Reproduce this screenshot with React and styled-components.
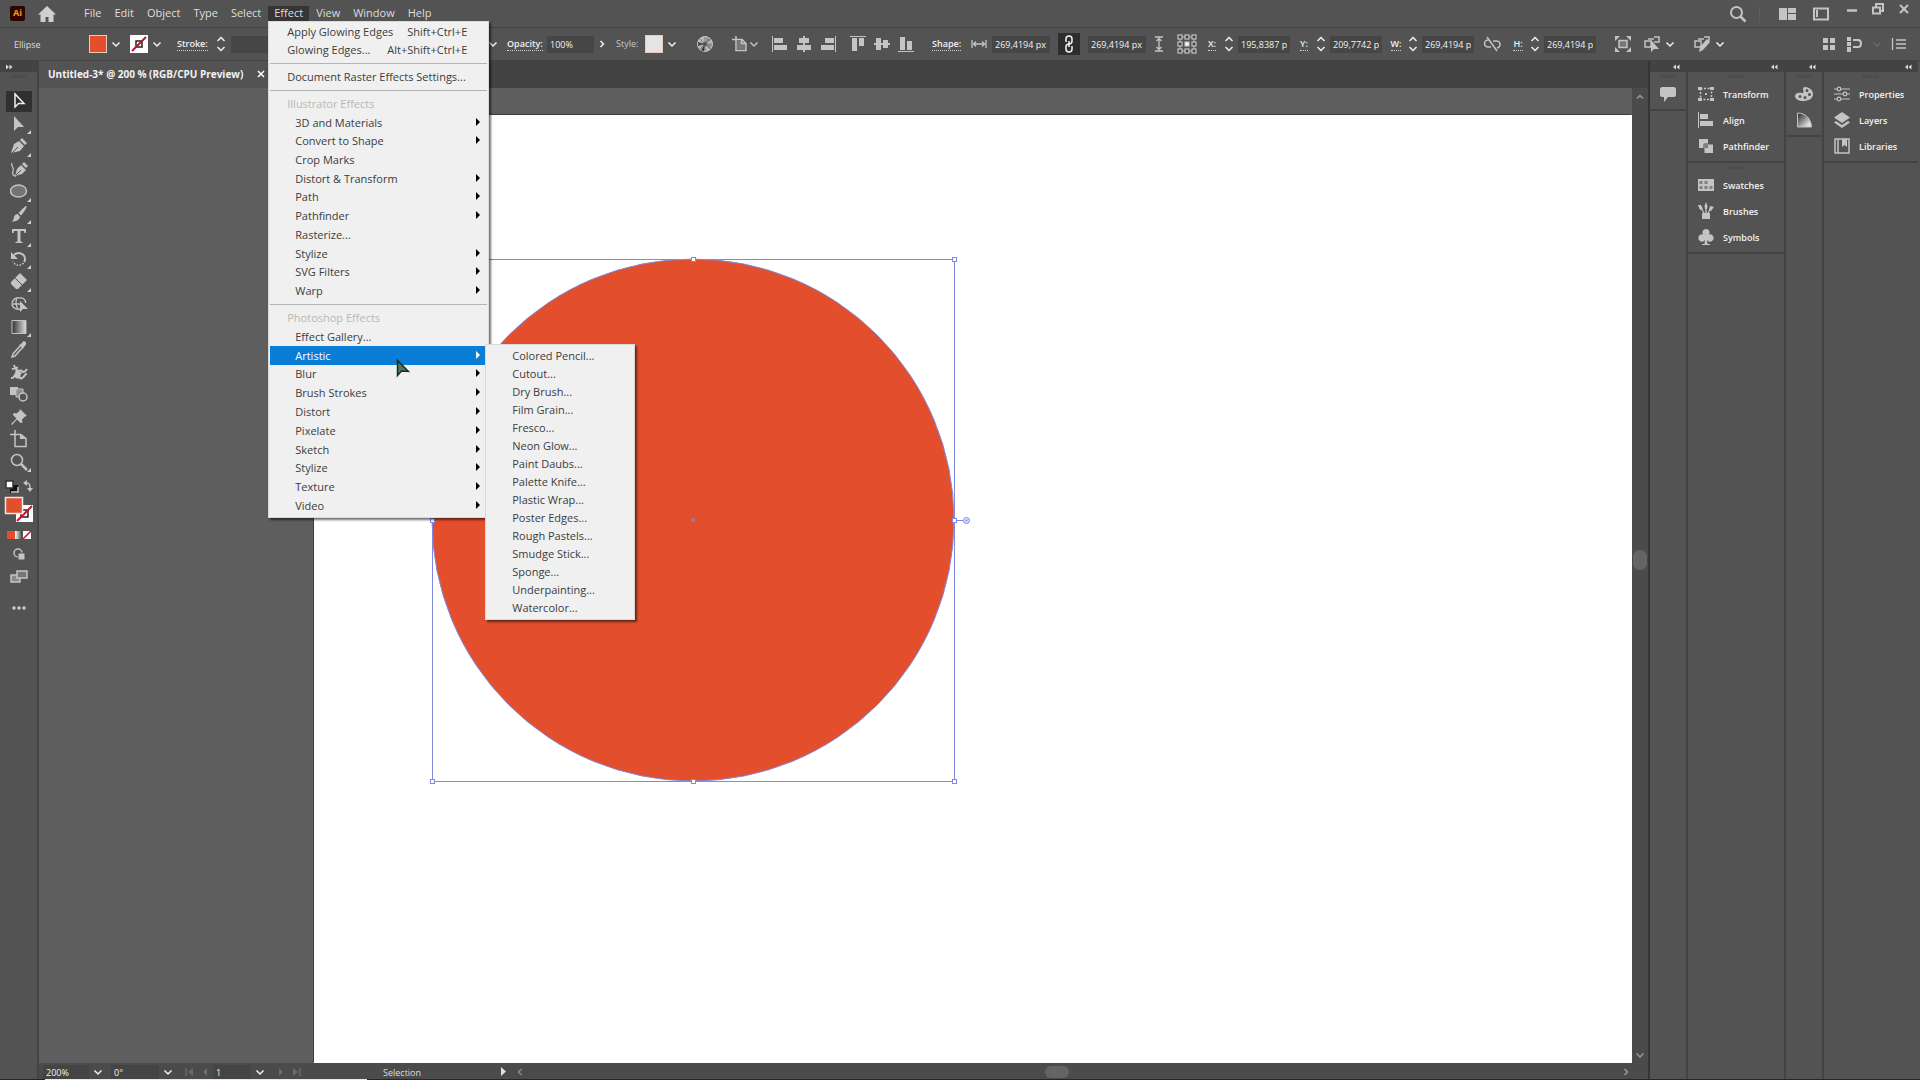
import React from "react";
import styled, { createGlobalStyle, css } from "styled-components";

const c = {
  bar: "#535353",
  edge: "#434343",
  field: "#464646",
  icon: "#c4c4c4",
  text: "#dedede",
  canvas: "#5e5e5e",
  menu: "#f0f0f0",
  select: "#0a7dd6",
  fill: "#e34f2d",
  path: "#8189e0",
};

const Global = createGlobalStyle`
  *, *::before, *::after { box-sizing: border-box; }
  body { margin: 0; background: ${c.bar}; overflow: hidden; }
  body, button, input, select {
    font-family: "Open Sans", "Noto Sans", "Segoe UI", sans-serif;
    font-size: 9px;
    color: ${c.text};
  }
  button { border: 0; padding: 0; background: none; cursor: default; }
  svg { display: block; flex: none; }
`;

const Screen = styled.div`
  display: flex;
  flex-direction: column;
  height: 100vh;
  background: ${c.bar};
`;

/* ---------- title bar ---------- */
const TitleBar = styled.header`
  display: flex;
  align-items: center;
  height: 28px;
  padding: 0 10px;
  border-bottom: 1px solid ${c.edge};
`;
const Logo = styled.div`
  width: 15px;
  height: 15px;
  margin-right: 13px;
  border-radius: 2px;
  background: #2d0500;
  color: #ff9a12;
  font-size: 9px;
  font-weight: 700;
  line-height: 14px;
  text-align: center;
`;
const MenuBar = styled.nav`
  display: flex;
  flex: 1;
  gap: 1px;
  margin-left: 22px;
`;
const MenuSlot = styled.div`
  position: relative;
`;
const MenuTitle = styled.button`
  display: block;
  height: 16px;
  padding: 0 6px 2px;
  font-size: 11px;
  line-height: 14px;
  background: ${(p) => (p.$open ? "#353535" : "none")};
`;
const WindowTools = styled.div`
  display: flex;
  align-items: center;
  gap: 16px;
`;
const Divider = styled.span`
  width: 1px;
  height: 16px;
  margin: 0 2px 0 -4px;
  background: #5e5e5e;
`;
const WindowButtons = styled.div`
  display: flex;
  align-items: flex-start;
  gap: 13px;
  height: 23px;
`;

/* ---------- menus ---------- */
const menuBox = css`
  position: absolute;
  background: ${c.menu};
  border: 1px solid #dadada;
  box-shadow: 2px 2px 2px rgba(0, 0, 0, 0.55);
`;
const Dropdown = styled.div`
  ${menuBox}
  z-index: 5;
  top: 15px;
  left: 0;
  width: 221px;
  padding: 1px;
`;
const MenuGroup = styled.div`
  display: grid;
  grid-auto-rows: 1fr;
  height: ${(p) => p.$h}px;
`;
const Rule = styled.hr`
  height: 8px;
  margin: 0;
  border: 0;
  background: linear-gradient(#b4b4b4, #b4b4b4) center / 100% 1px no-repeat;
`;
const RowWrap = styled.div`
  position: relative;
  display: grid;
`;
const MenuRow = styled.button`
  display: flex;
  align-items: center;
  justify-content: space-between;
  padding: 0 20px 0 ${(p) => (p.$top ? 17 : 25)}px;
  ${(p) => p.$arrow && "padding-right: 7px;"}
  font-size: 11px;
  line-height: 16px;
  white-space: nowrap;
  color: ${(p) => (p.$active ? "#fff" : "#3c3c3c")};
  background: ${(p) => (p.$active ? c.select : "none")};
`;
const MenuHeading = styled.div`
  display: flex;
  align-items: center;
  padding-left: 17px;
  font-size: 11px;
  line-height: 16px;
  color: #b8b8b8;
`;
const Submenu = styled.div`
  ${menuBox}
  z-index: 6;
  top: -2px;
  left: calc(100% - 2px);
  width: 150px;
  padding: 2px 1px;
`;

/* ---------- control bar ---------- */
const ControlBar = styled.section`
  display: flex;
  align-items: center;
  height: 33px;
  padding: 0 12px 0 14px;
  border-bottom: 1px solid ${c.edge};
  background: ${c.bar};
`;
const Section = styled.div`
  display: flex;
  align-items: center;
  gap: ${(p) => p.$gap || 0}px;
  padding-left: ${(p) => p.$lead || 6}px;
`;
const Cell = styled.span`
  display: flex;
  align-items: center;
  justify-content: center;
  width: ${(p) => p.$w}px;
`;
const Title = styled.span`
  width: 75px;
`;
const Label = styled.label`
  flex: none;
  width: ${(p) => p.$w}px;
  font-weight: ${(p) => (p.$plain ? 400 : 600)};
  line-height: 12px;
  text-align: ${(p) => (p.$center ? "center" : "left")};
  color: ${(p) => (p.$plain ? "#c8c8c8" : "#f0f0f0")};
  span {
    display: inline-block;
    border-bottom: 1px dotted #d0d0d0;
  }
`;
const Picker = styled.button`
  display: flex;
  align-items: center;
  width: 41px;
`;
const Swatch = styled.span`
  width: 18px;
  height: 18px;
  margin-right: 4px;
  border: 1px solid #f0c9bd;
  background: ${(p) => p.$color};
`;
const Field = styled.input`
  width: ${(p) => p.$w}px;
  height: 17px;
  padding: 0 3px;
  border: 0;
  outline: 0;
  background: ${c.field};
  color: #f2f2f2;
  font-weight: 500;
  cursor: default;
`;
const LinkButton = styled.button`
  display: grid;
  place-items: center;
  width: 22px;
  height: 22px;
  margin: 0 4px;
  background: #2e2e2e;
`;
const Spacer = styled.span`
  flex: 1;
`;

/* ---------- work area ---------- */
const Body = styled.main`
  display: flex;
  flex: 1;
  min-height: 0;
`;
const ToolColumn = styled.aside`
  display: flex;
  flex-direction: column;
  width: 39px;
  border-right: 2px solid ${c.edge};
`;
const PanelHead = styled.div`
  display: flex;
  align-items: center;
  justify-content: ${(p) => (p.$left ? "flex-start" : "flex-end")};
  height: 11px;
  padding: 0 6px;
  background: ${c.edge};
`;
const Grip = styled.div`
  width: 16px;
  height: 3px;
  margin: 3px auto;
  background: repeating-linear-gradient(90deg, #484848 0 1px, ${c.bar} 1px 2px);
`;
const ToolList = styled.div`
  display: grid;
  grid-auto-rows: 1fr;
  height: 383px;
  margin-top: 9px;
`;
const Tool = styled.button`
  position: relative;
  display: grid;
  place-items: center;
  width: 26px;
  margin: 1px 0 1px 6px;
  background: ${(p) => (p.$active ? "#303030" : "none")};
`;
const Corner = styled.i`
  position: absolute;
  right: 1px;
  bottom: 0;
  border: solid transparent;
  border-width: 2px;
  border-right-color: #d0d0d0;
  border-bottom-color: #d0d0d0;
`;
const ToolFoot = styled.div`
  display: flex;
  flex-direction: column;
  align-items: center;
  gap: 7px;
  margin-top: 6px;
`;
const Extra = styled.button`
  display: grid;
  place-items: center;
  height: 16px;
  margin-bottom: ${(p) => (p.$gap ? 8 : 0)}px;
`;

const Document = styled.section`
  display: flex;
  flex-direction: column;
  flex: 1;
  min-width: 0;
`;
const TabBar = styled.div`
  display: flex;
  height: 27px;
  background: ${c.edge};
`;
const Tab = styled.div`
  display: flex;
  align-items: center;
  gap: 14px;
  padding: 0 9px 2px;
  background: ${c.bar};
  color: #f2f2f2;
  font-size: 10px;
  font-weight: 700;
  white-space: nowrap;
`;
const CanvasRow = styled.div`
  display: flex;
  flex: 1;
  min-height: 0;
`;
const Canvas = styled.div`
  position: relative;
  flex: 1;
  padding: 27px 0 0 275px;
  background: ${c.canvas};
`;
const Artboard = styled.div`
  height: 100%;
  background: #fff;
  box-shadow: -1px -1px 0 #3c3c3c;
`;
const Artwork = styled.svg`
  position: absolute;
  left: 387px;
  top: 165px;
`;
const VScroll = styled.div`
  display: flex;
  flex-direction: column;
  align-items: center;
  justify-content: space-between;
  width: 16px;
  padding: 4px 0 3px;
  background: #4b4b4b;
`;
const Thumb = styled.span`
  width: ${(p) => (p.$vertical ? 14 : 24)}px;
  height: ${(p) => (p.$vertical ? 20 : 12)}px;
  margin: ${(p) => (p.$vertical ? "0 0 32px" : "0 32px 0 0")};
  border-radius: 8px;
  background: #646464;
`;
const StatusBar = styled.footer`
  display: flex;
  align-items: center;
  height: 16px;
  padding: 2px 17px 0 4px;
  background: #4b4b4b;
`;
const Combo = styled.span`
  display: flex;
  align-items: center;
  width: ${(p) => p.$w}px;
`;
const ComboSelect = styled.select`
  flex: 1;
  height: 14px;
  margin-right: 4px;
  padding: 0 3px;
  border: 0;
  appearance: none;
  background: #444;
  color: #f2f2f2;
`;
const Mode = styled.span`
  width: 116px;
`;
const HScroll = styled.div`
  display: flex;
  flex: 1;
  align-items: center;
  justify-content: space-between;
`;
const TaskEdge = styled.div`
  height: 1px;
  padding-left: 45px;
  background: #262626;
`;
const TaskStrip = styled.div`
  width: 322px;
  height: 1px;
  background: #e8e8e8;
`;

/* ---------- dock ---------- */
const Dock = styled.aside`
  display: flex;
  border-left: 2px solid #353535;
`;
const DockColumn = styled.div`
  width: ${(p) => p.$w}px;
  border-right: 2px solid ${(p) => (p.$last ? c.bar : c.edge)};
`;
const DockGroup = styled.div`
  padding-bottom: 2px;
  border-bottom: 2px solid ${c.edge};
`;
const DockItem = styled.button`
  display: flex;
  align-items: center;
  gap: 8px;
  width: 100%;
  height: 26px;
  padding-left: 9px;
  color: #f2f2f2;
  font-weight: 600;
`;

/* ---------- icons ---------- */
const Ic = ({ w = 18, h = 18, vb, children, ...rest }) => (
  <svg width={w} height={h} viewBox={vb || `0 0 ${w} ${h}`} fill="none" stroke={c.icon} strokeWidth="1.5" aria-hidden="true" {...rest}>
    {children}
  </svg>
);
const F = { fill: c.icon, stroke: "none" };
const Down = ({ color = "#f0f0f0" }) => (
  <Ic w={10} h={10} stroke={color}><path d="M1.500 3.500L5 7l3.500-3.500" /></Ic>
);
const Up = () => <Ic w={10} h={10} stroke="#999"><path d="M2 6.5l3-3 3 3" /></Ic>;
const Right = ({ color = "#f0f0f0" }) => (
  <Ic w={10} h={10} stroke={color}><path d="M3.5 2l3 3-3 3" /></Ic>
);
const Left = () => <Ic w={10} h={10} stroke="#8a8a8a"><path d="M6.5 2l-3 3 3 3" /></Ic>;
const Stepper = () => (
  <Ic w={10} h={16} stroke="#f0f0f0"><path d="M1.5 5L5 1.5 8.5 5M1.5 11L5 14.5 8.5 11" /></Ic>
);
const Double = ({ flip }) => (
  <Ic w={7} h={6} stroke="none"><path fill="#d8d8d8" d={flip ? "M0 .5L3 3 0 5.5zM3.5.5L6.5 3 3.500 5.500z" : "M3 .5L0 3l3 2.500zM6.5.5L3.5 3l3 2.500z"} /></Ic>
);
const NoneSwatch = () => (
  <Ic stroke="none">
    <path fill="#fff" d="M0 0h18v18H0z" />
    <path stroke="#222" strokeWidth="1.5" fill="none" d="M6 6h6v6H6z" />
    <path stroke="#c8102e" strokeWidth="2" d="M2 16L16 2" />
  </Ic>
);

const alignPaths = {
  left: "M1 1h1v16H1zM3 3h9v5H3zM3 10h13v5H3z",
  center: "M8 1h2v16H8zM4 3h10v5H4zM2 10h14v5H2z",
  right: "M16 1h1v16h-1zM6 3h9v5H6zM2 10h13v5H2z",
  top: "M1 1h16v1H1zM3 3h5v13H3zM10 3h5v8h-5z",
  middle: "M1 8h16v2H1zM3 3h5v12H3zM10 5h5v8h-5z",
  bottom: "M1 16h16v1H1zM3 2h5v13H3zM10 6h5v9h-5z",
};
const AlignIc = ({ kind }) => <Ic><path {...F} d={alignPaths[kind]} /></Ic>;

const tools = [
  ["Selection", <path stroke="#f0f0f0" d="M5 2v13l3.500-3.500H14z" />, false],
  ["Direct Selection", <path {...F} d="M4 1v15l4-4h6z" />, true],
  ["Pen", <><path {...F} d="M1 16l3-9 5-3 5 5-4 5zM10 3l2-2 5 5-2 2z" /><path stroke={c.bar} strokeWidth="1" d="M2 16l6-6" /></>, true],
  ["Curvature", <><path {...F} d="M5 16l2-7 4-4 5 5-4 4zM12 4l2-2 4 4-2 2z" /><path stroke={c.bar} strokeWidth="1" d="M5 16l6-6" /><path strokeWidth="1.3" d="M2 3c-2 3 3 4 1 8-1 3 0 5 3 5" /></>, false],
  ["Ellipse", <ellipse cx="8.500" cy="9" rx="8" ry="6" fill="#747474" />, true],
  ["Paintbrush", <path {...F} d="M16.5 1c1 1-3 7-5.500 9.500L8.500 8C11 5.500 15.500 0 16.500 1zM7.500 9l2.500 2.500c-.5 4-4 5-8.500 5 2-1 2-2 2.500-4.500.5-2 2-3 3.500-3z" />, true],
  ["Type", <path {...F} d="M2 2h14v4h-1.500l-.5-2h-3.500v10.500l2 .5v1h-7v-1l2-.5V4H4l-.5 2H2z" />, true],
  ["Rotate", <><path d="M4 5c4-4 11-1.500 11 4 0 1-.3 2-.8 3" strokeWidth="2" /><path {...F} d="M1 2v7h7z" /><path strokeDasharray="1.5 1.5" d="M13.5 13c-3 3.500-8.500 3-10.500-1.500" /></>, true],
  ["Eraser", <><path {...F} d="M10 1l7 7-9 9H6l-5-5v-2z" /><path stroke={c.bar} strokeWidth="1" d="M5 6l7 7" /></>, true],
  ["Shape Builder", <><path d="M11 14c-4 1-9-1-9-5s4-7 7-6c4-1 7 2 6.500 5M3 9h9M7 3c-2 3-1 8 1 11" strokeWidth="1.3" /><path {...F} d="M10 6v11l3-3h5z" /></>, false],
  ["Gradient", <><defs><linearGradient id="toolGrad"><stop stopColor="#333" /><stop offset="1" stopColor="#ddd" /></linearGradient></defs><path fill="url(#toolGrad)" d="M2 2.500h14v13H2z" strokeWidth="1" /></>, true],
  ["Eyedropper", <><path {...F} d="M9 5l2-1 2-2.500c1.500-1 4 1 3 3L14 7l-1 2z" /><path d="M10 6l-7 8-1 3 3-1 7-8" /></>, false],
  ["Puppet Warp", <><path strokeWidth="2" d="M4 2l1.500 4M2 6l6-1.500M6 6c2 4 5 0 6 2s3 1 5-2" /><path d="M1 15c4 1 2-4 6-4s1 6 5 4c3-1 2-4 5-4" strokeWidth="2" /><path {...F} d="M6 6l6 4-4 6-4-2z" /></>, false],
  ["Blend", <><path {...F} d="M0 2h8v8H0z" /><path fill="#8b8b8b" d="M6 4h7v8H6z" strokeWidth="1" /><circle cx="13" cy="12" r="4" fill={c.bar} /></>, false],
  ["Pin", <path {...F} d="M10 1l7 7-2 .5-3 3 .5 3-2 .5L7 11.500 2 17l-1-1 5.500-5.500L3 7l.5-2 3 .5 3-2.500z" />, false],
  ["Artboard", <><path d="M0 4.500h11l5 4v8H5V0" /><path {...F} d="M10 4v5h6z" /></>, false],
  ["Zoom", <><circle cx="7" cy="7" r="5.500" /><path strokeWidth="2.5" d="M11 11l6 6" /></>, true],
];

const dockIcons = {
  Transform: <><path strokeDasharray="2 1.500" d="M3.500 3.500h11v11h-11z" /><path {...F} d="M1 2h4v3H1zM13 2h4v3h-4zM1 13h4v3H1zM13 13h4v3h-4zM8 8h2v2H8z" /></>,
  Align: <path {...F} d="M1 1h1v16H1zM3 3h8v5H3zM3 10h13v5H3z" />,
  Pathfinder: <><path {...F} d="M2 2h9v9H2z" /><path fill={c.icon} stroke={c.bar} strokeWidth="1" d="M7 7h9.500v9.500H7z" /><path fill="#777" stroke="none" d="M8 8h3v3H8z" /></>,
  Swatches: <><path {...F} d="M1 3h16v12H1z" /><path fill="#808080" stroke="none" d="M2.500 5h3v3h-3zM7.500 5h3v3h-3zM2.500 10h3v3h-3zM7.500 10h3v3h-3zM12.500 10h3v3h-3z" /></>,
  Brushes: <><path {...F} d="M5 11h8v6H5z" /><path strokeWidth="1.3" d="M7 11L4 6M9 11V3M11 11l3-5" /><path {...F} d="M1 3l3 0 2 4-3 1zM7.500 4L9 0l1.500 4-.5 3H8zM13 4l4 1-3 4-2-1z" /></>,
  Symbols: <path {...F} d="M9 1a3.500 3.500 0 013 5.500A3.600 3.600 0 1110 12l.5 4H13v1H5v-1h2.500L8 12A3.600 3.600 0 116 6.500 3.500 3.500 0 019 1z" />,
  Properties: <><path strokeWidth="1" d="M1 4h16M1 9h16M1 14h16" /><g fill={c.bar} strokeWidth="1.2"><circle cx="6" cy="4" r="1.8" /><circle cx="12" cy="9" r="1.8" /><circle cx="6" cy="14" r="1.8" /></g></>,
  Layers: <path {...F} d="M9 1l8 5.500L9 12 1 6.500zM3 10l6 4 6-4 2 1.500L9 17l-8-5.500z" />,
  Libraries: <><path d="M2 2h14v14H2zM5 2v14" /><path {...F} d="M9 2h5v8l-2.500-2L9 10z" /></>,
};

/* ---------- menu data ---------- */
const illustrator = ["3D and Materials>", "Convert to Shape>", "Crop Marks", "Distort & Transform>", "Path>", "Pathfinder>", "Rasterize...", "Stylize>", "SVG Filters>", "Warp>"];
const photoshop = ["Effect Gallery...", "Artistic>", "Blur>", "Brush Strokes>", "Distort>", "Pixelate>", "Sketch>", "Stylize>", "Texture>", "Video>"];
const artistic = ["Colored Pencil...", "Cutout...", "Dry Brush...", "Film Grain...", "Fresco...", "Neon Glow...", "Paint Daubs...", "Palette Knife...", "Plastic Wrap...", "Poster Edges...", "Rough Pastels...", "Smudge Stick...", "Sponge...", "Underpainting...", "Watercolor..."];

function Entry({ text }) {
  const arrow = text.endsWith(">");
  const name = arrow ? text.slice(0, -1) : text;
  const active = name === "Artistic";
  return (
    <RowWrap>
      <MenuRow $arrow={arrow} $active={active}>
        {name}
        {arrow && <Ic w={4} h={10}><path stroke="none" fill={active ? "#fff" : "#000"} d="M0 0l4 4-4 4z" /></Ic>}
      </MenuRow>
      {active && (
        <Submenu>
          <MenuGroup $h={270}>{artistic.map((t) => <MenuRow key={t}>{t}</MenuRow>)}</MenuGroup>
        </Submenu>
      )}
    </RowWrap>
  );
}

function EffectMenu() {
  return (
    <Dropdown>
      <MenuGroup $h={37}>
        <MenuRow $top><span>Apply Glowing Edges</span><span>Shift+Ctrl+E</span></MenuRow>
        <MenuRow $top><span>Glowing Edges...</span><span>Alt+Shift+Ctrl+E</span></MenuRow>
      </MenuGroup>
      <Rule />
      <MenuGroup $h={19}><MenuRow $top>Document Raster Effects Settings...</MenuRow></MenuGroup>
      <Rule />
      <MenuGroup $h={206}>
        <MenuHeading>Illustrator Effects</MenuHeading>
        {illustrator.map((t) => <Entry key={t} text={t} />)}
      </MenuGroup>
      <Rule />
      <MenuGroup $h={207}>
        <MenuHeading>Photoshop Effects</MenuHeading>
        {photoshop.map((t) => <Entry key={t} text={t} />)}
      </MenuGroup>
    </Dropdown>
  );
}

function Coordinate({ id, label, value }) {
  return (
    <>
      <Label $center $w={16} htmlFor={id}><span>{label}:</span></Label>
      <Stepper />
      <Field id={id} $w={52} defaultValue={value} />
    </>
  );
}

function Controls() {
  return (
    <ControlBar>
      <Title>Ellipse</Title>
      <Picker aria-label="Fill"><Swatch $color={c.fill} /><Down /></Picker>
      <Picker aria-label="Stroke colour"><NoneSwatch /><Cell $w={18}><Down /></Cell></Picker>
      <Section>
        <Label $w={38} htmlFor="stroke"><span>Stroke:</span></Label>
        <Cell $w={12}><Stepper /></Cell>
        <Cell $w={4} />
        <Field id="stroke" $w={254} defaultValue="" />
        <Cell $w={16}><Down /></Cell>
      </Section>
      <Section>
        <Label $w={40} htmlFor="opacity"><span>Opacity:</span></Label>
        <Field id="opacity" $w={47} defaultValue="100%" />
        <Cell $w={16}><Right /></Cell>
      </Section>
      <Section>
        <Label as="span" $plain $w={29}>Style:</Label>
        <Picker aria-label="Style"><Swatch $color="#e4e4e4" /><Down /></Picker>
        <Cell $w={37}>
          <Ic><circle cx="9" cy="9" r="7.500" fill="#b8b8b8" strokeWidth="1" /><path fill="#3a3a3a" stroke="none" d="M9 9L2 7v4zM9 9l-4 6 3 1.500z" /><path fill="#8a8a8a" stroke="none" d="M9 9l2-7 4 3zM9 9l7 1-2 4z" /><path stroke="#6a6a6a" strokeWidth=".8" d="M9 2v14M2 9h14M4 4l10 10M14 4L4 14" /><circle cx="9" cy="9" r="2" fill="#555" stroke="none" /></Ic>
        </Cell>
        <Cell $w={44}>
          <Ic><path d="M1 4.500h10l4 4v7H5V1" /><path fill="#777" d="M6 6h5l3 3v5H6z" stroke="none" /><path d="M10.500 4.500v4H15" /></Ic>
          <Down color={c.icon} />
        </Cell>
      </Section>
      <Section $lead={1}>
        {["left", "center", "right"].map((k) => <Cell key={k} $w={24}><AlignIc kind={k} /></Cell>)}
      </Section>
      <Section>
        {["top", "middle", "bottom"].map((k) => <Cell key={k} $w={24}><AlignIc kind={k} /></Cell>)}
      </Section>
      <Section $lead={14} $gap={4}>
        <Label $w={34} htmlFor="sw"><span>Shape:</span></Label>
        <Ic><path strokeWidth="1.3" d="M2 5v8M16 5v8M3 9h12M6 6.500L3.500 9 6 11.500M12 6.500L14.500 9 12 11.500" /></Ic>
        <Field id="sw" $w={58} defaultValue="269,4194 px" />
        <LinkButton aria-label="Link width and height">
          <Ic w={10} h={18} stroke="#f4f4f4"><path d="M2 7V4a3 3 0 016 0v2a3 3 0 01-3 3M8 11v3a3 3 0 01-6 0v-2a3 3 0 013-3M5 6v6" /></Ic>
        </LinkButton>
        <Field aria-label="Shape height" $w={58} defaultValue="269,4194 px" />
        <Ic><path strokeWidth="1.3" d="M5 2h8M5 16h8M9 3v12M6.500 6L9 3.500 11.500 6M6.500 12L9 14.500 11.500 12" /></Ic>
      </Section>
      <Section $gap={4}>
        <Cell $w={26}>
          <Ic w={20} h={20}>
            {[3, 10, 17].map((y) => [3, 10, 17].map((x) => (
              <rect key={`${x}-${y}`} x={x - 2} y={y - 2} width="4" height="4" fill={x === 10 && y === 10 ? "#fff" : "#444"} strokeWidth="1.2" />
            )))}
            <path strokeWidth="1" d="M5 3h3M12 3h3M5 17h3M12 17h3M3 5v3M3 12v3M17 5v3M17 12v3" />
          </Ic>
        </Cell>
        <Coordinate id="x" label="X" value="195,8387 p" />
      </Section>
      <Section $gap={4}><Coordinate id="y" label="Y" value="209,7742 p" /></Section>
      <Section $gap={4}>
        <Coordinate id="w" label="W" value="269,4194 p" />
        <Cell $w={28}>
          <Ic><path d="M8 12H5a3.500 3.500 0 010-7h1M10 6h3a3.500 3.500 0 011 7M4 2l10 14" /></Ic>
        </Cell>
        <Coordinate id="h" label="H" value="269,4194 p" />
      </Section>
      <Section $lead={16} $gap={4}>
        <Cell $w={22}><Ic><path fill="#777" d="M5 5.500h8v7H5z" /><path {...F} d="M1 1h5L1 6zM17 1h-5l5 5zM1 17h5l-5-5zM17 17h-5l5-5z" /></Ic></Cell>
        <Cell $w={46}>
          <Ic><path d="M2 6h6v6H2zM11 2h5v5h-5M5 4h6" /><path {...F} d="M8 5v12l3-3h5z" /></Ic>
          <Cell $w={18}><Down /></Cell>
        </Cell>
        <Cell $w={46}>
          <Ic><path d="M2 6h6v6H2zM11 2h5v4M5 4h6" /><path {...F} d="M6 17l1-5 7-8 3 3-7 8z" /></Ic>
          <Cell $w={18}><Down /></Cell>
        </Cell>
      </Section>
      <Spacer />
      <Section $gap={8}>
        <Ic><path {...F} d="M3 3h5v5H3zM10 3h5v5h-5zM3 10h5v5H3zM10 10h5v5h-5z" /></Ic>
        <Ic><path {...F} d="M1 2h4v4H1zM1 7h4v4H1zM1 12h4v5H1z" /><path strokeWidth="2" d="M7 5h5c4 0 4 7 0 7H7" /></Ic>
        <Down color="#666" />
        <Ic><path d="M6 5h10M6 9h10M6 13h10M2.500 3v12" strokeWidth="1.3" /></Ic>
      </Section>
    </ControlBar>
  );
}

function Toolbox() {
  return (
    <ToolColumn>
      <PanelHead $left><Double flip /></PanelHead>
      <Grip />
      <ToolList>
        {tools.map(([name, art, more], i) => (
          <Tool key={name} aria-label={name} $active={i === 0}><Ic>{art}</Ic>{more && <Corner />}</Tool>
        ))}
      </ToolList>
      <ToolFoot>
        <Ic w={30} h={45} stroke="none">
          <path fill="#111" d="M6 6h8v8H6z" /><path fill="#fff" stroke="#333" d="M2 2h7v7H2z" /><path stroke="#ccc" fill="none" d="M14 8v5H7" />
          <path stroke={c.icon} fill="none" strokeWidth="1.5" d="M22 4c4 0 4 2 4 6" /><path {...F} d="M23 1v6l-4-3zM23 9h6l-3 4z" />
          <path fill="#fff" d="M12 26h17v17H12z" /><path stroke="#222" strokeWidth="1.5" fill="none" d="M17 31h7v7h-7z" /><path stroke="#c8102e" strokeWidth="2" d="M13 42l15-15" />
          <path fill={c.fill} stroke="#e8e8e8" d="M1.500 18.500h17v16h-17z" />
        </Ic>
        <Ic w={26} h={8} stroke="none">
          <defs><linearGradient id="modeGrad"><stop stopColor="#fff" /><stop offset="1" stopColor="#444" /></linearGradient></defs>
          <path fill={c.fill} d="M1 0h8v8H1z" /><path fill="url(#modeGrad)" d="M9 0h7v8H9z" /><path fill="#fff" d="M17 0h8v8h-8z" /><path stroke="#c8102e" strokeWidth="1.5" d="M17 8l8-8" />
        </Ic>
        <Extra aria-label="Drawing mode"><Ic w={14} h={14}><circle cx="6" cy="6" r="4" /><path fill={c.icon} stroke={c.bar} strokeWidth="1" d="M6 6h7v7H6z" /></Ic></Extra>
        <Extra $gap aria-label="Screen mode"><Ic w={20} h={16}><path fill="#888" d="M2 6h9v7H2z" /><path fill="#777" d="M8 2h10v7H8z" /></Ic></Extra>
        <Extra aria-label="Edit toolbar"><Ic w={16} h={6} stroke="none"><g fill="#d0d0d0"><circle cx="3" cy="3" r="1.7" /><circle cx="8" cy="3" r="1.7" /><circle cx="13" cy="3" r="1.7" /></g></Ic></Extra>
      </ToolFoot>
    </ToolColumn>
  );
}

function Drawing() {
  const p = [[2, 2], [263, 2], [524, 2], [2, 263], [524, 263], [2, 524], [263, 524], [524, 524]];
  return (
    <Canvas>
      <Artboard />
      <Artwork width="560" height="532" viewBox="-4 -4 560 532" aria-label="Ellipse">
        <circle cx="263" cy="263" r="261" fill={c.fill} stroke={c.path} />
        <path d="M2.500 2.500h522v522h-522zM524 263.500h9" fill="none" stroke={c.path} />
        <path d="M261 261l4 4M265 261l-4 4" stroke={c.path} />
        {p.map(([x, y]) => <rect key={`${x}-${y}`} x={x - 1.5} y={y - 1.5} width="4" height="4" fill="#fff" stroke={c.path} />)}
        <circle cx="536.5" cy="263.5" r="3" fill="#dfe2ff" stroke={c.path} /><circle cx="536.5" cy="263.5" r="1" fill={c.path} />
      </Artwork>
    </Canvas>
  );
}

function DockPanel({ items }) {
  return (
    <DockGroup>
      <Grip />
      {items.map((n) => <DockItem key={n}><Ic>{dockIcons[n]}</Ic>{n}</DockItem>)}
    </DockGroup>
  );
}

const Pointer = styled.svg`
  position: fixed;
  z-index: 9;
  left: 396px;
  top: 359px;
`;

export default function App() {
  return (
    <Screen>
      <Global />
      <TitleBar>
        <Logo>Ai</Logo>
        <Ic stroke="none"><path fill="#cfcfcf" d="M9 1l9 8.500h-2.500V17h-5v-5h-3v5h-5V9.500H0z" /></Ic>
        <MenuBar>
          {["File", "Edit", "Object", "Type", "Select", "Effect", "View", "Window", "Help"].map((m) => (
            <MenuSlot key={m}>
              <MenuTitle $open={m === "Effect"}>{m}</MenuTitle>
              {m === "Effect" && <EffectMenu />}
            </MenuSlot>
          ))}
        </MenuBar>
        <WindowTools>
          <Ic><circle cx="7.500" cy="7.500" r="5.500" strokeWidth="2" /><path strokeWidth="2.5" d="M11.500 11.500l5 5" /></Ic>
          <Divider />
          <Ic><path {...F} d="M1 3h8v12H1zM10 3h8v5h-8zM10 9h8v6h-8z" /></Ic>
          <Ic><path d="M2 3.500h14v11H2z" strokeWidth="2" /><path {...F} d="M4 5h2v7H4z" /></Ic>
          <WindowButtons>
            <button aria-label="Minimise"><Ic w={12} h={14}><path strokeWidth="2.5" d="M1 8.500h10" /></Ic></button>
            <button aria-label="Restore"><Ic w={14} h={14}><path strokeWidth="2" d="M2 5.500h7v6H2zM5 5V2h7v7H9" /></Ic></button>
            <button aria-label="Close"><Ic w={12} h={14}><path strokeWidth="2" d="M2 3l8 8M10 3l-8 8" /></Ic></button>
          </WindowButtons>
        </WindowTools>
      </TitleBar>
      <Controls />
      <Body>
        <Toolbox />
        <Document>
          <TabBar>
            <Tab>
              Untitled-3* @ 200 % (RGB/CPU Preview)
              <button aria-label="Close document"><Ic w={8} h={8} stroke="#fff"><path d="M1 1l6 6M7 1L1 7" /></Ic></button>
            </Tab>
          </TabBar>
          <CanvasRow>
            <Drawing />
            <VScroll><Up /><Thumb $vertical /><Down color="#999" /></VScroll>
          </CanvasRow>
          <StatusBar>
            <Combo $w={68}><ComboSelect aria-label="Zoom"><option>200%</option></ComboSelect><Down /><Cell $w={8} /></Combo>
            <Combo $w={70}><ComboSelect aria-label="Rotation"><option>0°</option></ComboSelect><Down /><Cell $w={8} /></Combo>
            <Cell $w={16}><Ic w={10} h={10} stroke="#6a6a6a"><path d="M2 1v8" /><path fill="#6a6a6a" stroke="none" d="M9 1v8L4 5z" /></Ic></Cell>
            <Cell $w={16}><Ic w={10} h={10} stroke="none"><path fill="#6a6a6a" d="M7 1v8L3 5z" /></Ic></Cell>
            <Combo $w={60}><ComboSelect aria-label="Artboard"><option>1</option></ComboSelect><Down /><Cell $w={8} /></Combo>
            <Cell $w={16}><Ic w={10} h={10} stroke="none"><path fill="#6a6a6a" d="M3 1v8l4-4z" /></Ic></Cell>
            <Cell $w={16}><Ic w={10} h={10} stroke="#6a6a6a"><path d="M8 1v8" /><path fill="#6a6a6a" stroke="none" d="M1 1v8l5-4z" /></Ic></Cell>
            <Cell $w={78} />
            <Mode>Selection</Mode>
            <Ic w={10} h={10} stroke="none"><path fill="#e0e0e0" d="M2 0v9l5-4.500z" /></Ic>
            <Cell $w={6} />
            <HScroll><Left /><Thumb /><Right color="#999" /></HScroll>
          </StatusBar>
        </Document>
        <Dock>
          <DockColumn $w={38}>
            <PanelHead><Double /></PanelHead>
            <DockGroup>
              <Grip />
              <DockItem aria-label="Comments"><Ic><path {...F} d="M3 2h12c1 0 2 1 2 2v6c0 1-1 2-2 2H9l-4 5v-5H3c-1 0-2-1-2-2V4c0-1 1-2 2-2z" /></Ic></DockItem>
            </DockGroup>
          </DockColumn>
          <DockColumn $w={98}>
            <PanelHead><Double /></PanelHead>
            <DockPanel items={["Transform", "Align", "Pathfinder"]} />
            <DockPanel items={["Swatches", "Brushes", "Symbols"]} />
          </DockColumn>
          <DockColumn $w={38}>
            <PanelHead><Double /></PanelHead>
            <DockGroup>
              <Grip />
              <DockItem aria-label="Color"><Ic><path {...F} fillRule="evenodd" d="M10 2c4 0 8 3 8 7 0 5-5 7-10 7-4 0-8-2-8-5s4-4 7-3c2 0 2-1 1-3 0-1 0-3 2-3zM5 10a1.500 1.500 0 100 3 1.500 1.500 0 000-3zM10 11a1.500 1.500 0 100 3 1.500 1.500 0 000-3zM14.500 8a1.500 1.500 0 100 3 1.500 1.500 0 000-3zM12 4a1.500 1.500 0 100 3 1.500 1.500 0 000-3z" /></Ic></DockItem>
              <DockItem aria-label="Color Guide"><Ic><defs><linearGradient id="guideGrad" x1="0" y1="0" x2="1" y2="1"><stop stopColor="#222" /><stop offset=".8" stopColor="#ddd" /></linearGradient></defs><path fill="url(#guideGrad)" strokeWidth="1" d="M2.500 2C11 2 16 8 16.500 16h-14z" /></Ic></DockItem>
            </DockGroup>
          </DockColumn>
          <DockColumn $w={96} $last>
            <PanelHead><Double /></PanelHead>
            <DockPanel items={["Properties", "Layers", "Libraries"]} />
          </DockColumn>
        </Dock>
      </Body>
      <TaskEdge><TaskStrip /></TaskEdge>
      <Pointer width="14" height="19" viewBox="0 0 14 19" aria-hidden="true">
        <path d="M1.500 1.500v15l4-4.500 7 .5z" fill="#4c7a5f" stroke="#1d2b25" strokeWidth="1.5" />
      </Pointer>
    </Screen>
  );
}
